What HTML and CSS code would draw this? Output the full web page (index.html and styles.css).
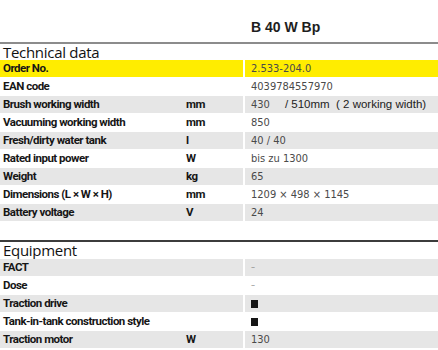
FILE: index.html
```html
<!DOCTYPE html>
<html lang="en">
<head>
<meta charset="utf-8">
<title>B 40 W Bp</title>
<link rel="stylesheet" href="styles.css">
</head>
<body>
<div class="page">
  <div class="head">
    <div></div>
    <div class="model">B 40 W Bp</div>
  </div>

  <section class="sec tech">
    <h2 class="sec-title">Technical data</h2>
    <div class="row hl"><div class="lab"><span>Order No.</span><span></span></div><div class="val">2.533-204.0</div></div>
    <div class="row"><div class="lab"><span>EAN code</span><span></span></div><div class="val">4039784557970</div></div>
    <div class="row alt"><div class="lab"><span>Brush working width</span><span>mm</span></div><div class="val">430<span class="extra">/ 510mm  ( 2 working width)</span></div></div>
    <div class="row"><div class="lab"><span>Vacuuming working width</span><span>mm</span></div><div class="val">850</div></div>
    <div class="row alt"><div class="lab"><span>Fresh/dirty water tank</span><span>l</span></div><div class="val">40 / 40</div></div>
    <div class="row"><div class="lab"><span>Rated input power</span><span>W</span></div><div class="val">bis zu 1300</div></div>
    <div class="row alt"><div class="lab"><span>Weight</span><span>kg</span></div><div class="val">65</div></div>
    <div class="row"><div class="lab"><span>Dimensions (L × W × H)</span><span>mm</span></div><div class="val">1209 × 498 × 1145</div></div>
    <div class="row alt"><div class="lab"><span>Battery voltage</span><span>V</span></div><div class="val">24</div></div>
  </section>

  <section class="sec equip">
    <h2 class="sec-title">Equipment</h2>
    <div class="row alt"><div class="lab"><span>FACT</span><span></span></div><div class="val"><span class="dash">–</span></div></div>
    <div class="row"><div class="lab"><span>Dose</span><span></span></div><div class="val"><span class="dash">–</span></div></div>
    <div class="row alt"><div class="lab"><span>Traction drive</span><span></span></div><div class="val"><span class="sq"></span></div></div>
    <div class="row"><div class="lab"><span>Tank-in-tank construction style</span><span></span></div><div class="val"><span class="sq"></span></div></div>
    <div class="row alt"><div class="lab"><span>Traction motor</span><span>W</span></div><div class="val">130</div></div>
  </section>
</div>
</body>
</html>
```

FILE: styles.css
```css
html, body {
  margin: 0;
  padding: 0;
  background: #ffffff;
}

.page {
  width: 438px;
}

.head {
  display: grid;
  grid-template-columns: 243px 1fr;
  column-gap: 2px;
  height: 42px;
}

.model {
  font-family: "Liberation Sans", Arial, sans-serif;
  font-weight: bold;
  font-size: 14px;
  color: #1e1e1e;
  padding-left: 6px;
  padding-top: 19px;
  line-height: 16px;
}

.sec {
  border-top: 2px solid #8c8c8c;
}

.sec.equip {
  margin-top: 19px;
  border-top-color: #3c3c3c;
}

.sec-title {
  margin: 0;
  height: 16px;
  padding-left: 3px;
  font-family: "Open Sans", sans-serif;
  font-weight: normal;
  font-size: 15px;
  letter-spacing: -0.3px;
  line-height: 16px;
  color: #111;
}

.equip .sec-title {
  height: 17px;
}

.row {
  display: grid;
  grid-template-columns: 243px 1fr;
  column-gap: 2px;
  height: 17px;
  margin-bottom: 1px;
}

.row.alt .lab,
.row.alt .val {
  background: #e6e6e6;
}

.row.hl .lab,
.row.hl .val {
  background: #ffed00;
}

.lab {
  display: grid;
  grid-template-columns: 183px 1fr;
  padding-left: 3px;
  font-family: Roboto, "Open Sans", sans-serif;
  font-weight: bold;
  font-size: 11.5px;
  letter-spacing: -0.5px;
  line-height: 17px;
  color: #161616;
  white-space: nowrap;
}

.val {
  display: flex;
  align-items: center;
  padding-left: 6px;
  font-family: "DejaVu Sans Condensed", "DejaVu Sans", sans-serif;
  font-size: 11px;
  line-height: 17px;
  color: #4a4a4a;
  white-space: nowrap;
}

.extra {
  margin-left: 15px;
  font-family: "Liberation Sans", Arial, sans-serif;
  font-size: 11.5px;
  color: #222;
  white-space: pre;
}

.dash {
  color: #8a8a8a;
  font-size: 9px;
}

.sq {
  display: inline-block;
  width: 7px;
  height: 8px;
  background: #161616;
}
```
